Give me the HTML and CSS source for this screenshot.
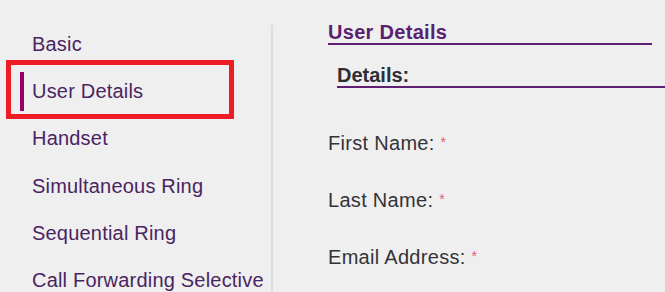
FILE: index.html
```html
<!DOCTYPE html>
<html>
<head>
<meta charset="utf-8">
<link rel="stylesheet" href="styles.css">
</head>
<body>
<div class="page">
  <nav class="sidebar">
    <ul class="menu">
      <li class="item">Basic</li>
      <li class="item active">User Details<span class="highlight"></span></li>
      <li class="item">Handset</li>
      <li class="item">Simultaneous Ring</li>
      <li class="item">Sequential Ring</li>
      <li class="item">Call Forwarding Selective</li>
    </ul>
  </nav>
  <main class="content">
    <h1 class="title">User Details</h1>
    <h2 class="subtitle">Details:</h2>
    <div class="form">
      <div class="row">First Name: <span class="req">*</span></div>
      <div class="row">Last Name: <span class="req">*</span></div>
      <div class="row">Email Address: <span class="req">*</span></div>
    </div>
  </main>
</div>
</body>
</html>
```
FILE: styles.css
```css
html, body {
  margin: 0;
  padding: 0;
  background: #efefef;
  overflow: hidden;
}
body {
  width: 665px;
  height: 292px;
  font-family: "Liberation Sans", Arial, sans-serif;
  font-size: 20px;
}
.page {
  display: flex;
  align-items: flex-start;
  height: 292px;
}
.sidebar {
  width: 271px;
  flex: 0 0 271px;
  margin-top: 25px;
  height: 267px;
  border-right: 2px solid #dcdcdc;
}
.menu {
  list-style: none;
  margin: -4px 0 0 0;
  padding: 0;
}
.item {
  position: relative;
  display: flex;
  align-items: center;
  height: 47.2px;
  line-height: 47.2px;
  padding-left: 20px;
  color: #4a2462;
  letter-spacing: 0.2px;
  white-space: nowrap;
}
.item::before {
  content: "";
  display: block;
  width: 4px;
  height: 39px;
  margin-right: 8px;
  background: transparent;
}
.item.active::before {
  background: #97006a;
}
.highlight {
  position: absolute;
  left: 6px;
  top: -8px;
  width: 218px;
  height: 49px;
  border: 5px solid #ee1c25;
  pointer-events: none;
}
.content {
  flex: 1;
  padding-left: 55px;
  padding-top: 21px;
  display: flex;
  flex-direction: column;
  align-items: flex-start;
}
.title {
  margin: 0;
  width: 324px;
  font-size: 20px;
  font-weight: bold;
  line-height: 22px;
  letter-spacing: 0.3px;
  color: #5a2170;
  border-bottom: 2px solid #5e1f72;
}
.subtitle {
  margin: 19px -30px 0 9px;
  align-self: stretch;
  font-size: 20px;
  font-weight: bold;
  line-height: 22px;
  color: #2e2e34;
  border-bottom: 2px solid #5e1f72;
}
.form {
  margin-top: 43px;
  display: flex;
  flex-direction: column;
}
.row {
  height: 57px;
  line-height: 22px;
  color: #333338;
  letter-spacing: 0.3px;
  white-space: nowrap;
}
.req {
  font-size: 14px;
  color: #e0607a;
  vertical-align: 3px;
}
```
